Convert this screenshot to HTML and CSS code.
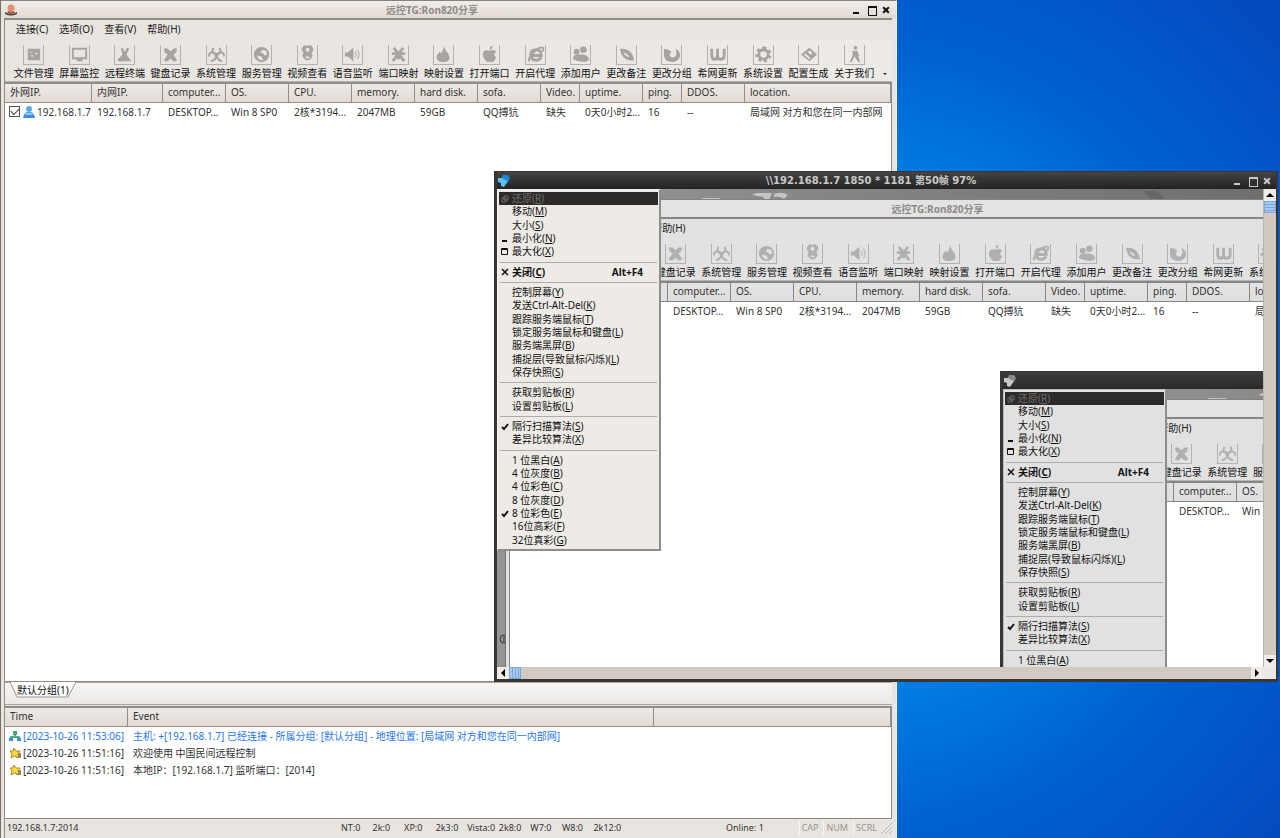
FILE: index.html
```html
<!DOCTYPE html>
<html lang="zh-CN">
<head>
<meta charset="utf-8">
<title>远控TG:Ron820分享</title>
<link rel="stylesheet" href="styles.css">
</head>
<body>
<svg class="sprite" aria-hidden="true">
  <symbol id="i-file" viewBox="0 0 20 20"><path fill-rule="evenodd" d="M4 4h13v12H4zM6 7v1h3V7zM7 11v1h3v-1zM12 8v2h2V8z"/></symbol>
  <symbol id="i-screen" viewBox="0 0 20 20"><path fill-rule="evenodd" d="M2 3h16v12h-5v2H7v-2H2zM4 5v8h12V5z"/></symbol>
  <symbol id="i-term" viewBox="0 0 20 20"><path d="M6 4l2-1 2 4 3-4 2 1-3 6 3 4 2 3H3v-2l5-5z"/></symbol>
  <symbol id="i-keys" viewBox="0 0 20 20"><path d="M3 4q4-2 6 2h2q2-4 6-2l-1 4-3 2 2 3 2 3q-4 3-6-1H9q-2 4-6 1l2-3 2-3-3-2z"/></symbol>
  <symbol id="i-bio" viewBox="0 0 20 20"><g fill="none" stroke="currentColor" stroke-width="2"><path d="M7 3q-3 4 1 6 2 1 4 0 4-2 1-6"/><path d="M2 12q0-5 5-4 4 2 2 6-2 3-5 3"/><path d="M18 12q0-5-5-4-4 2-2 6 2 3 5 3"/></g><circle cx="10" cy="11" r="2"/></symbol>
  <symbol id="i-globe" viewBox="0 0 20 20"><path fill-rule="evenodd" d="M10 2a8 8 0 1 0 .1 0zM11 5l4 1 1 4-3 1-1-2-3-1zM5 11l5 1 2 4q-5 1-7-5z"/></symbol>
  <symbol id="i-cam" viewBox="0 0 20 20"><path fill-rule="evenodd" d="M10 1a4 4 0 0 1 4 7 5 5 0 1 1-8 0A4 4 0 0 1 10 1zM10 3a2 2 0 1 0 .1 0zM8 12v2h4v-2z"/></symbol>
  <symbol id="i-sound" viewBox="0 0 20 20"><path d="M2 8h3l6-5v14l-6-5H2z"/><path fill="none" stroke="currentColor" d="M13 7q2 3 0 6M15 5q4 5 0 10"/></symbol>
  <symbol id="i-star" viewBox="0 0 20 20"><path fill="none" stroke="currentColor" stroke-width="3" d="M10 9L5 3M10 9l5-6M3 9h14M10 9l-6 8M10 9l6 8M10 9v6"/></symbol>
  <symbol id="i-drop" viewBox="0 0 20 20"><path d="M11 1q0 4 4 8 4 9-5 9t-7-7l3-4 2 2z"/></symbol>
  <symbol id="i-apple" viewBox="0 0 20 20"><path d="M10 6q5-2 7 1-4 3 0 6-2 5-4 5-3-1-5 0-5-3-5-9 1-5 7-3zM10 5q0-4 3-4 0 4-3 4z"/></symbol>
  <symbol id="i-ie" viewBox="0 0 20 20"><path fill="none" stroke="currentColor" stroke-width="3" d="M5 11h11q0-6-5-6-6 0-6 5 0 6 6 6 3 0 5-3"/><path fill="none" stroke="currentColor" stroke-width="2" d="M4 17q-3-2 4-9t10-5q1 1-1 4"/></symbol>
  <symbol id="i-users" viewBox="0 0 20 20"><circle cx="13" cy="5" r="3.500"/><circle cx="6" cy="7" r="3"/><path d="M2 15q0-5 5-5h6q6 1 6 6l-5 2-6-1z"/></symbol>
  <symbol id="i-leaf" viewBox="0 0 20 20"><path fill-rule="evenodd" d="M3 4q13-1 15 12-13 2-15-12zM7 8q1 4 6 5-2-4-6-5z"/></symbol>
  <symbol id="i-fox" viewBox="0 0 20 20"><path fill-rule="evenodd" d="M2 4l5 1 3 2-2 3q1 4 5 3 4-3 1-9 5 2 5 7-1 7-9 7-8-1-8-8z"/></symbol>
  <symbol id="i-w" viewBox="0 0 20 20"><path fill="none" stroke="currentColor" stroke-width="3" d="M4 4v7q0 4 3 4 3 0 3-4V4M10 11q0 4 3 4 4 0 4-4V4"/></symbol>
  <symbol id="i-gear" viewBox="0 0 20 20"><circle cx="10" cy="10" r="5" fill="none" stroke="currentColor" stroke-width="3"/><path fill="none" stroke="currentColor" stroke-width="3" stroke-dasharray="3 3" d="M10 3a7 7 0 1 1-.1 0"/></symbol>
  <symbol id="i-build" viewBox="0 0 20 20"><path d="M11 3l8 7-8 7-9-7z"/><path fill="#efece9" d="M5 10l2-1 5 5-1 1zM9 7l3-1 2 3-2 1z"/></symbol>
  <symbol id="i-walk" viewBox="0 0 20 20"><circle cx="11" cy="3" r="2"/><path d="M8 6h5l2 5-1 1 2 6h-2l-4-6-3 6H5l3-7z"/></symbol>
  <symbol id="i-app" viewBox="0 0 12 12"><path fill="#4a4340" d="M0 8q6 4 12 0v2q-6 3-12 0z"/><circle cx="6" cy="4" r="3.500" fill="#dc9468"/><path fill="#b3543a" d="M3 7q3 1 6 0l1 2q-4 2-8 0z"/></symbol>
  <symbol id="i-view" viewBox="0 0 12 12"><path fill="var(--view-a)" d="M5 0h5l2 3-2 4H5L3 4z"/><path fill="var(--view-b)" d="M0 3h4l3 2 3 1-4 6-3-1V8L0 7z"/></symbol>
  <symbol id="i-host" viewBox="0 0 12 12"><circle cx="6" cy="3" r="3" fill="#5aaee8"/><path fill="#3c8ee0" d="M0 12q1-5 4-6h4q3 1 4 6z"/><path fill="#8cc8f4" d="M3 7q3-1 6 0l1 2H2z"/></symbol>
  <symbol id="i-net" viewBox="0 0 12 12"><path fill="none" stroke="#58a890" stroke-width="2" d="M6 4v3M2 9V7h8v2"/><path fill="#46a878" d="M4 1h4v4H4z"/><path fill="#3f8fd8" d="M0 8h4v3H0zM8 8h4v3H8z"/></symbol>
  <symbol id="i-fav" viewBox="0 0 12 12"><path fill="#8a8a80" d="M9 6h3v5H7z"/><path fill="#ffd83a" stroke="#a8862c" d="M5 1l2 3 4 0-2 3 1 4-4-2-4 2 1-4-2-3 3 0z"/></symbol>
</svg>

<main class="desktop" id="desktop"></main>

<template id="tpl-app">
  <section class="app">
    <header class="titlebar">
      <svg class="icon12"><use href="#i-app"/></svg>
      <h1>远控TG:Ron820分享</h1>
      <div class="controls">
        <button type="button" class="ctl min" aria-label="最小化"></button>
        <button type="button" class="ctl max" aria-label="最大化"></button>
        <button type="button" class="ctl close" aria-label="关闭"></button>
      </div>
    </header>
    <div class="body">
      <nav class="menubar">
        <button type="button">连接(C)</button><button type="button">选项(O)</button><button type="button">查看(V)</button><button type="button">帮助(H)</button>
      </nav>
      <div class="toolbar"><div class="tools"></div><span class="more"></span></div>
      <div class="hosts">
        <table>
          <colgroup><col class="w87"><col class="w71"><col class="w63"><col class="w63"><col class="w63"><col class="w63"><col class="w63"><col class="w63"><col class="w39"><col class="w63"><col class="w39"><col class="w63"><col></colgroup>
          <thead><tr><th>外网IP.</th><th>内网IP.</th><th>computer...</th><th>OS.</th><th>CPU.</th><th>memory.</th><th>hard disk.</th><th>sofa.</th><th>Video.</th><th>uptime.</th><th>ping.</th><th>DDOS.</th><th>location.</th></tr></thead>
          <tbody><tr>
            <td><label class="host"><input type="checkbox" checked><svg class="icon12"><use href="#i-host"/></svg>192.168.1.7</label></td>
            <td>192.168.1.7</td><td>DESKTOP...</td><td>Win 8 SP0</td><td>2核*3194...</td><td>2047MB</td><td>59GB</td><td>QQ搏犺</td><td>缺失</td><td>0天0小时2...</td><td>16</td><td>--</td><td>局域网 对方和您在同一内部网</td>
          </tr></tbody>
        </table>
      </div>
    </div>
  </section>
</template>

<template id="tpl-lower">
  <div class="tabs">
    <div class="lead"></div>
    <button type="button" class="tab"><svg viewBox="0 0 66 16"><path d="M0 0L7 15H58L66 0"/></svg><span>默认分组(1)</span></button>
    <div class="rest"></div>
  </div>
  <div class="log">
    <table>
      <colgroup><col class="w122"><col class="w526"><col></colgroup>
      <thead><tr><th>Time</th><th>Event</th><th></th></tr></thead>
      <tbody>
        <tr class="online"><td><span class="host"><svg class="icon12"><use href="#i-net"/></svg>[2023-10-26 11:53:06]</span></td><td colspan="2">主机: +[192.168.1.7] 已经连接 - 所属分组: [默认分组] - 地理位置: [局域网 对方和您在同一内部网]</td></tr>
        <tr><td><span class="host"><svg class="icon12"><use href="#i-fav"/></svg>[2023-10-26 11:51:16]</span></td><td colspan="2">欢迎使用 中国民间远程控制</td></tr>
        <tr><td><span class="host"><svg class="icon12"><use href="#i-fav"/></svg>[2023-10-26 11:51:16]</span></td><td colspan="2">本地IP：[192.168.1.7] 监听端口：[2014]</td></tr>
      </tbody>
    </table>
  </div>
  <footer class="status">
    <span class="addr">192.168.1.7:2014</span>
    <div class="counts"><span>NT:0</span><span>2k:0</span><span>XP:0</span><span>2k3:0</span><span>Vista:0</span><span>2k8:0</span><span>W7:0</span><span>W8:0</span><span>2k12:0</span></div>
    <span class="total">Online: 1</span>
    <div class="locks"><span>CAP</span><span>NUM</span><span>SCRL</span></div>
    <svg class="grip" viewBox="0 0 12 12"><path d="M1 12L12 1M5 12l7-7M9 12l3-3"/></svg>
  </footer>
</template>

<template id="tpl-viewer">
  <section class="viewer">
    <header class="viewbar">
      <svg class="icon12"><use href="#i-view"/></svg>
      <h2></h2>
      <div class="controls">
        <button type="button" class="ctl min" aria-label="最小化"></button>
        <button type="button" class="ctl max" aria-label="最大化"></button>
        <button type="button" class="ctl close" aria-label="关闭"></button>
      </div>
    </header>
    <div class="viewbody">
      <div class="screen">
        <svg class="wall" viewBox="0 0 768 480"><path class="lite" d="M255 6l4-2h16l-3 7h-4l-2-3zM277 5q8-3 14 1l-4 4q-4-3-10-2zM205 9h18v2h-18z"/><path class="dim" d="M646 2h14l8 9h-12z"/><circle cx="7" cy="450" r="4"/><path d="M7 447v6"/></svg>
      </div>
      <div class="vbar"><button type="button" class="arrow up" aria-label="向上"></button><div class="thumb"></div><button type="button" class="arrow down" aria-label="向下"></button></div>
      <div class="hbar"><button type="button" class="arrow left" aria-label="向左"></button><div class="thumb"></div><button type="button" class="arrow right" aria-label="向右"></button></div>
      <div class="corner"></div>
    </div>
    <menu class="sysmenu"></menu>
  </section>
</template>
<script src="app.js"></script>
</body>
</html>
```
FILE: styles.css
```css
* { box-sizing: border-box; }
body {
  margin: 0;
  font: 10px/14px "Noto Sans", "Noto Sans CJK SC", sans-serif;
  color: #333;
}
button {
  font: inherit;
  color: inherit;
  background: none;
  border: 0;
  padding: 0;
  white-space: nowrap;
}
h1, h2, menu { margin: 0; padding: 0; }
.sprite { position: absolute; width: 0; height: 0; }
.icon12 { width: 12px; height: 12px; flex: none; display: block; }

.desktop {
  --face: #edeae7;
  --face-low: #e2dad4;
  --bar: #e8e4e0;
  --edge: #938b85;
  --glyph: #a5a4a3;
  --menu: #eeebe7;
  --view-a: #1c86d8;
  --view-b: #5cc0f4;
  position: relative;
  height: 100vh;
  overflow: hidden;
  background: radial-gradient(circle at 66% 52%, #0092f2 0, #0080e4 240px, #0062d2 390px, #0449be 600px);
}
.screen {
  --face: #e3e3e3;
  --face-low: #dfdfdf;
  --bar: #e1e1e1;
  --edge: #868686;
  --glyph: #b0b0b0;
  --menu: #e1e1e1;
  --view-a: #888;
  --view-b: #c8c8c8;
}

/* main window */
.app {
  position: absolute;
  display: flex;
  flex-direction: column;
  background: var(--bar);
  border-left: 1px solid #7a706a;
  border-top: 1px solid #8a817b;
}
.desktop > .app { left: 0; top: 0; width: 70%; min-width: 897px; height: 100%; border-right: 1px solid #f4f2f0; }
.screen > .app { left: 8px; top: 10px; width: 897px; height: 838px; }
.screen > .app .icon12 { visibility: hidden; }
.titlebar, .viewbar {
  display: flex;
  align-items: center;
  flex: none;
  height: 17px;
  padding: 0 5px 0 4px;
}
.titlebar {
  background: linear-gradient(#f0edea, var(--face-low));
}
.screen .titlebar { background: var(--face); }
.titlebar h1, .viewbar h2 {
  flex: 1;
  text-align: center;
  font-size: 10px;
  line-height: 14px;
  font-weight: 700;
}
.titlebar h1 { color: #8e8a87; padding-right: 4px; }
.controls { display: flex; gap: 5px; }
.ctl { width: 10px; height: 10px; position: relative; }
.ctl::before, .ctl::after { content: ""; position: absolute; }
.min::before { left: 2px; bottom: 1px; width: 6px; height: 2px; background: currentColor; }
.max::before { left: 2px; top: 1px; width: 7px; height: 7px; border: 1px solid currentColor; border-top-width: 2px; }
.close::before, .close::after { left: 1px; top: 4px; width: 8px; height: 2px; background: currentColor; transform: rotate(45deg); }
.close::after { transform: rotate(-45deg); }
.titlebar .ctl { color: #111; }

.body {
  flex: 1;
  min-height: 0;
  display: flex;
  flex-direction: column;
  margin: 0 4px 0 3px;
  border-top: 2px solid var(--edge);
  border-left: 1px solid var(--edge);
}
.menubar { display: flex; gap: 11px; height: 20px; padding: 0 0 2px 11px; flex: none; color: #222; }
.toolbar {
  display: flex;
  height: 42px;
  flex: none;
  padding: 5px 1px 0 6px;
  background: linear-gradient(90deg, var(--bar), var(--face));
  border-bottom: 1px solid #b8b2ad;
}
.tools { flex: 1; display: grid; grid-template-columns: repeat(19, minmax(0, 1fr)); }
.tool { display: flex; flex-direction: column; align-items: center; gap: 1px; color: #111; }
.tool svg {
  width: 21px;
  height: 20px;
  border: 1px solid #b4b1ae;
  border-top: 0;
  color: var(--glyph);
  fill: currentColor;
}
.more { width: 14px; padding-left: 6px; align-self: end; height: 8px; }
.more::before { content: ""; display: block; width: 0; border: 2px solid transparent; border-top-color: #222; }

table { width: 100%; table-layout: fixed; border-collapse: separate; border-spacing: 0; }
th, td { padding: 0 0 2px 5px; text-align: left; font-weight: 400; white-space: nowrap; overflow: hidden; }
th {
  height: 19px;
  background: linear-gradient(var(--face), var(--face-low));
  border-right: 1px solid var(--edge);
  border-bottom: 1px solid var(--edge);
}
td { height: 17px; padding-bottom: 0; }
.w39 { width: 39px; }
.w63 { width: 63px; }
.w71 { width: 71px; }
.w87 { width: 87px; }
.w122 { width: 123px; }
.w526 { width: 526px; }
.hosts, .log { background: #fff; border: 1px solid var(--edge); border-top-width: 2px; }
.hosts { flex: 1; min-height: 0; border-left-width: 0; }
.host { display: flex; align-items: center; gap: 2px; margin-left: -1px; }
.host input {
  appearance: none;
  width: 11px;
  height: 11px;
  margin: 0 1px 0 0;
  border: 1px solid #555;
  background: #fff;
  flex: none;
}
.host input:checked::before {
  content: "";
  display: block;
  width: 7px;
  height: 4px;
  margin: 1px;
  border: solid #333;
  border-width: 0 0 1px 1px;
  transform: rotate(-45deg);
}

.tabs {
  display: flex;
  flex: none;
  height: 23px;
  border-bottom: 1px solid #aaa39e;
  background: linear-gradient(#f8f7f6, #eae7e4);
}
.lead { width: 5px; border-top: 1px solid #aaa39e; }
.rest { flex: 1; border-top: 1px solid #aaa39e; }
.tab { position: relative; width: 66px; height: 16px; }
.tab svg { display: block; width: 66px; height: 16px; fill: #fff; stroke: #99928d; }
.tab span { position: absolute; inset: 0 0 0 7px; text-align: left; line-height: 16px; color: #111; }
.log { height: 113px; margin-top: 1px; flex: none; border-left-width: 0; }
.log th { height: 19px; }
.online { color: #2877f0; }
.status {
  display: flex;
  align-items: center;
  flex: none;
  height: 19px;
  padding: 0 0 1px 2px;
  font: 9px/14px "Noto Sans", "Noto Sans CJK SC", sans-serif;
  color: #333;
  background: #e8e4df;
}
.addr { width: 334px; }
.counts { display: grid; grid-template-columns: repeat(9, 1fr); width: 284px; white-space: nowrap; }
.total { padding-left: 101px; flex: 1; }
.locks { display: flex; gap: 5px; color: #99938e; }
.locks span { border-left: 1px solid #f8f6f4; padding-left: 2px; }
.grip { width: 12px; height: 12px; margin-left: 3px; fill: none; stroke: #bdb6b0; }

/* remote screen window */
.viewer {
  position: absolute;
  display: flex;
  flex-direction: column;
  background: #383736;
  padding: 1px 2px 3px 3px;
}
.desktop > .viewer { left: 494px; right: 2px; top: 171px; height: 511px; }
.screen > .viewer { left: 503px; top: 182px; width: 784px; height: 511px; }
.viewbar { height: 17px; background: linear-gradient(#454444, #232323); padding: 0 4px 0 1px; color: #c9c9c9; }
.screen .viewbar { background: linear-gradient(#3c3c3c, #2a2a2a); }
.viewbar h2 { font-family: "DejaVu Sans", "Noto Sans CJK SC", sans-serif; }
.viewbody {
  flex: 1;
  min-height: 0;
  display: grid;
  grid-template: minmax(0, 1fr) 12px / minmax(0, 1fr) 13px;
}
.screen {
  position: relative;
  overflow: hidden;
  background: linear-gradient(100deg, #999, #808080 50%, #6b6b6b);
}
.wall { position: absolute; left: 0; top: 0; width: 768px; height: 480px; fill: none; stroke: #333; }
.wall .lite { fill: #c4c4c4; stroke: none; }
.wall .dim { fill: #666; stroke: none; }
.vbar, .hbar { display: flex; background: #d2c9c0; }
.vbar { flex-direction: column; border-left: 1px solid #bcb3ab; }
.vbar .down { margin-top: auto; }
.hbar .right { margin-left: auto; }
.thumb { background: repeating-linear-gradient(#a8c8ee 0 2px, #7ba6da 2px 3px); border: 1px solid #7ba6da; width: 12px; height: 12px; }
.hbar .thumb { background: repeating-linear-gradient(90deg, #a8c8ee 0 2px, #7ba6da 2px 3px); }
.arrow { width: 12px; height: 12px; background: #efece8; display: grid; place-items: center; }
.arrow::before { content: ""; border: 4px solid transparent; }
.up::before { border-bottom-color: #000; border-top: 0; }
.down::before { border-top-color: #000; border-bottom: 0; }
.left::before { border-right-color: #000; border-left: 0; }
.right::before { border-left-color: #000; border-right: 0; }
.corner { background: #ebe7e2; }

.sysmenu {
  position: absolute;
  left: 3px;
  top: 18px;
  width: 164px;
  height: 362px;
  padding: 2px 1px;
  display: flex;
  flex-direction: column;
  background: var(--menu);
  border: 1px solid #f6f4f2;
  border-right: 2px solid #8f8d8b;
  border-bottom: 2px solid #8f8d8b;
  list-style: none;
  color: #111;
}
.screen .sysmenu { border-left-color: #bbb; border-top-color: #bbb; }
.sysmenu li { flex: 1; min-height: 0; display: flex; align-items: center; }
.sysmenu .sep { flex: 0 0 7px; }
.sep::before { content: ""; flex: 1; margin: 0 1px; border-top: 1px solid #b0aba6; }
.sysmenu button { display: flex; align-items: center; width: 100%; height: 13px; line-height: 13px; text-align: left; }
.sysmenu .mark { width: 12px; height: 12px; margin-right: 1px; flex: none; fill: none; stroke: currentColor; }
.sysmenu .key { margin-left: auto; padding-right: 15px; }
.sysmenu .strong { font-weight: 700; }
.sysmenu .off { background: #2c2b2a; color: #6e6c6a; }
.sysmenu u { text-underline-offset: 1px; }
```
FILE: app.js
```javascript
const tools = [
  ['文件管理', 'file'], ['屏幕监控', 'screen'], ['远程终端', 'term'], ['键盘记录', 'keys'],
  ['系统管理', 'bio'], ['服务管理', 'globe'], ['视频查看', 'cam'], ['语音监听', 'sound'],
  ['端口映射', 'star'], ['映射设置', 'drop'], ['打开端口', 'apple'], ['开启代理', 'ie'],
  ['添加用户', 'users'], ['更改备注', 'leaf'], ['更改分组', 'fox'], ['希网更新', 'w'],
  ['系统设置', 'gear'], ['配置生成', 'build'], ['关于我们', 'walk']
];

// text, access key, mark, class
const items = [
  ['还原', 'R', 'restore', 'off'], ['移动', 'M'], ['大小', 'S'], ['最小化', 'N', 'min'], ['最大化', 'X', 'max'],
  null,
  ['关闭', 'C', 'close', 'strong'],
  null,
  ['控制屏幕', 'Y'], ['发送Ctrl-Alt-Del', 'K'], ['跟踪服务端鼠标', 'T'], ['锁定服务端鼠标和键盘', 'L'],
  ['服务端黑屏', 'B'], ['捕捉层(导致鼠标闪烁)', 'L'], ['保存快照', 'S'],
  null,
  ['获取剪贴板', 'R'], ['设置剪贴板', 'L'],
  null,
  ['隔行扫描算法', 'S', 'tick'], ['差异比较算法', 'X'],
  null,
  ['1 位黑白', 'A'], ['4 位灰度', 'B'], ['4 位彩色', 'C'], ['8 位灰度', 'D'],
  ['8 位彩色', 'E', 'tick'], ['16位高彩', 'F'], ['32位真彩', 'G']
];

const marks = {
  restore: '<path d="M5 3h4v4H5zM3 5h4v4H3z"/>',
  min: '<path stroke-width="2" d="M3 8h5"/>',
  max: '<path d="M2.500 2.500h6v6h-6zM2 3.500h7"/>',
  close: '<path stroke-width="1.500" d="M3 3l6 6M9 3L3 9"/>',
  tick: '<path stroke-width="2" d="M3 6l2 2 4-5"/>'
};

const clone = id => document.getElementById(id).content.cloneNode(true);

function addApp(parent, full) {
  const node = clone('tpl-app');
  node.querySelector('.tools').innerHTML = tools.map(([label, icon]) =>
    `<button type="button" class="tool"><svg><use href="#i-${icon}"/></svg>${label}</button>`).join('');
  if (full) node.querySelector('.body').append(clone('tpl-lower'));
  parent.append(node);
}

function addViewer(parent, depth) {
  const node = clone('tpl-viewer');
  const screen = node.querySelector('.screen');
  if (depth === 0) node.querySelector('h2').textContent = '\\\\192.168.1.7 1850 * 1181 第50帧 97%';
  node.querySelector('.sysmenu').innerHTML = items.map(item => {
    if (!item) return '<li class="sep"></li>';
    const [text, key, mark, cls] = item;
    const shortcut = cls === 'strong' ? '<span class="key">Alt+F4</span>' : '';
    return `<li><button type="button" class="${cls || ''}"><svg class="mark" viewBox="0 0 12 12">${marks[mark] || ''}</svg><span>${text}(<u>${key}</u>)</span>${shortcut}</button></li>`;
  }).join('');
  addApp(screen, false);
  if (depth < 1) addViewer(screen, depth + 1);
  parent.append(node);
}

const desktop = document.getElementById('desktop');
addApp(desktop, true);
addViewer(desktop, 0);
```
